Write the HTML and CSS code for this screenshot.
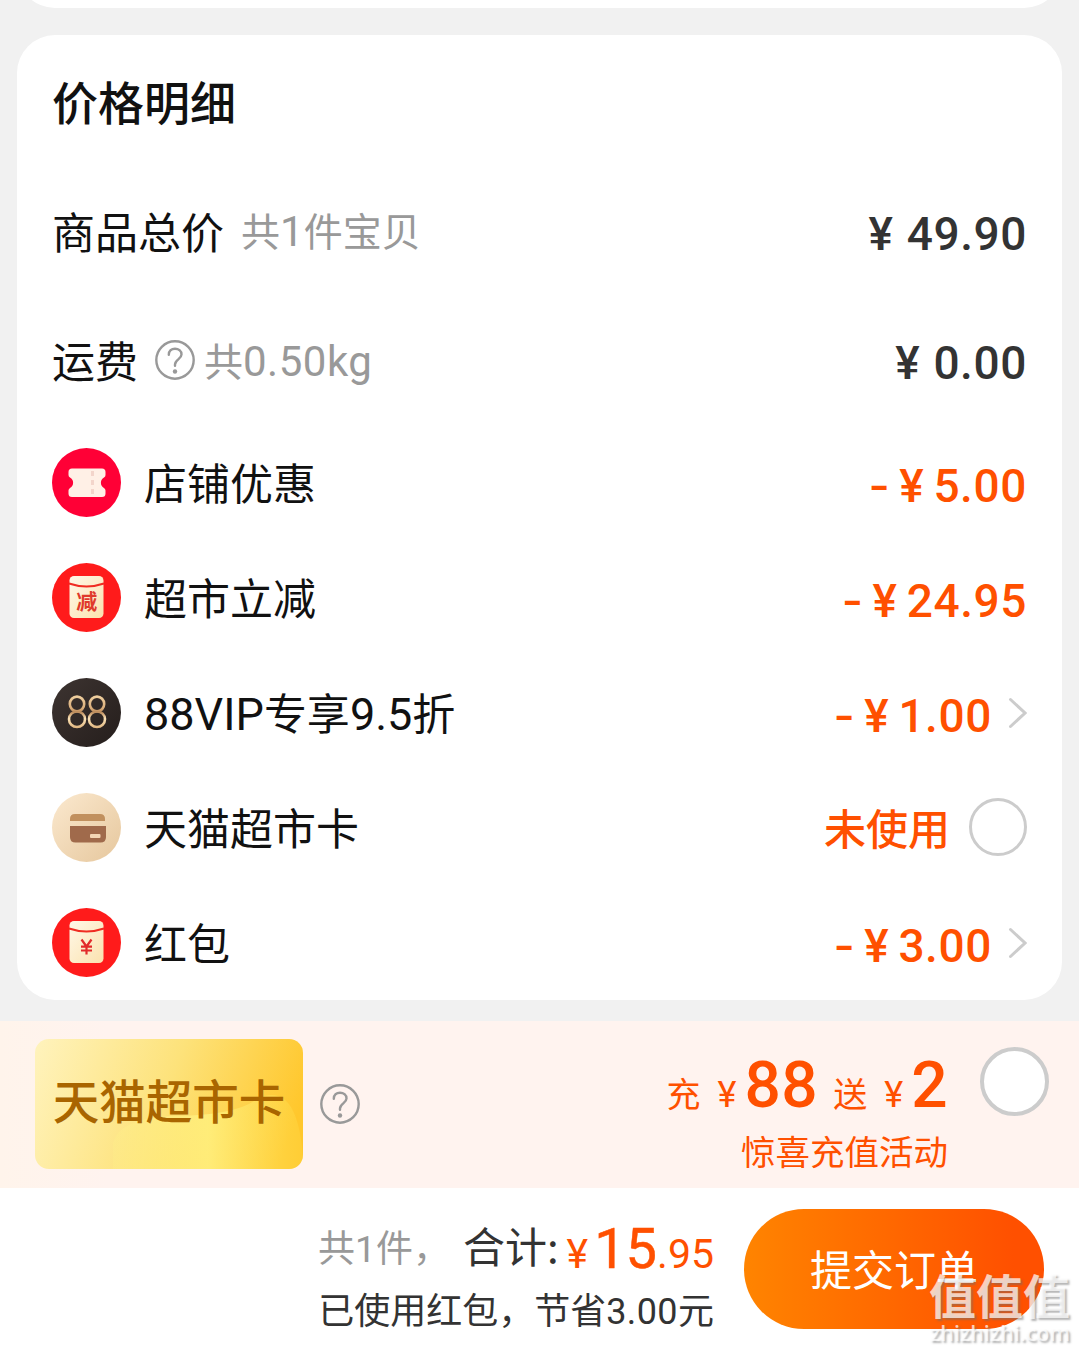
FILE: index.html
```html
<!DOCTYPE html>
<html lang="zh-CN">
<head>
    <meta charset="UTF-8">
    <meta name="viewport" content="width=device-width, initial-scale=1.0">
    <title>确认订单</title>
    <link rel="stylesheet" href="styles.css">
</head>
<body>

<div class="prev-card"></div>

<div class="price-card">
    <h3 class="card-title">价格明细</h3>

    <div class="row">
        <span class="label">商品总价</span>
        <span class="note note-goods">共<span class="num">1</span>件宝贝</span>
        <span class="price"><span class="yen">¥</span>49.90</span>
    </div>
    <div class="row">
        <span class="label">运费</span>
        <svg class="help" width="40" height="40" viewBox="0 0 40 40" fill="none" stroke="#999" stroke-width="2.4" stroke-linecap="round">
            <circle cx="20" cy="20" r="18.7"/>
            <path d="M13.8 14.8C13.8 10.8 16.5 8.700 20 8.700s6.500 2.300 6.500 5.800c0 4.600-6.500 5.200-6.500 10v1.200"/>
            <circle cx="20" cy="31.500" r="2.200" fill="#999" stroke="none"/>
        </svg>
        <span class="note note-weight">共<span class="num">0.50kg</span></span>
        <span class="price"><span class="yen">¥</span>0.00</span>
    </div>

    <div class="row discount">
        <svg class="icon" width="69" height="69" viewBox="0 0 69 69">
            <circle cx="34.5" cy="34.5" r="34.5" fill="#ff0036"/>
            <path d="M20 20.500h30q3.500 0 3.500 3.500v3q0 1.500-1.500 2.500a6 6 0 0 0 0 10.500q1.500 1 1.500 2.500v3q0 3.500-3.500 3.500H20q-3.500 0-3.500-3.500v-3q0-1.500 1.500-2.500a6 6 0 0 0 0-10.500q-1.500-1-1.500-2.500v-3q0-3.500 3.500-3.500z" fill="#fff0e6"/>
            <path d="M40.500 23v5M40.500 32v5M40.500 41v5" stroke="#f3d5cb" stroke-width="3"/>
        </svg>
        <span class="label">店铺优惠</span>
        <span class="price"><span class="minus">-</span><span class="yen">¥</span>5.00</span>
    </div>
    <div class="row discount">
        <svg class="icon" width="69" height="69" viewBox="0 0 69 69">
            <defs>
                <linearGradient id="packet" x1="0" y1="0" x2="1" y2="1">
                    <stop offset="0" stop-color="#fff8e8"/>
                    <stop offset="1" stop-color="#fbe2ae"/>
                </linearGradient>
            </defs>
            <circle cx="34.5" cy="34.5" r="34.5" fill="#ff1b1b"/>
            <rect x="17.5" y="13" width="34" height="42" rx="4.5" fill="url(#packet)"/>
            <path d="M17 20.500q17.500 6 35 0" fill="none" stroke="#f02c22" stroke-width="2"/>
            <text class="packet-char" x="34.700" y="45.500" text-anchor="middle">减</text>
        </svg>
        <span class="label">超市立减</span>
        <span class="price"><span class="minus">-</span><span class="yen">¥</span>24.95</span>
    </div>
    <div class="row discount">
        <svg class="icon" width="69" height="69" viewBox="0 0 69 69">
            <defs>
                <linearGradient id="gold" gradientUnits="userSpaceOnUse" x1="0" y1="18" x2="0" y2="50">
                    <stop offset="0" stop-color="#efcf9f"/>
                    <stop offset=".4" stop-color="#d9ab78"/>
                    <stop offset=".5" stop-color="#b98858"/>
                    <stop offset=".7" stop-color="#fbe2b6"/>
                    <stop offset="1" stop-color="#e0b680"/>
                </linearGradient>
                <linearGradient id="dark" x1="0" y1="0" x2="1" y2="1">
                    <stop offset="0" stop-color="#3d3431"/>
                    <stop offset="1" stop-color="#251e1c"/>
                </linearGradient>
            </defs>
            <circle cx="34.5" cy="34.5" r="34.5" fill="url(#dark)"/>
            <g fill="none" stroke="url(#gold)" stroke-width="2.600">
                <ellipse cx="25" cy="26" rx="7.200" ry="7.400"/>
                <ellipse cx="25" cy="41.200" rx="8" ry="7.800"/>
                <ellipse cx="45" cy="26" rx="7.200" ry="7.400"/>
                <ellipse cx="45" cy="41.200" rx="8" ry="7.800"/>
            </g>
        </svg>
        <span class="label label-vip"><span class="num">88VIP</span>专享<span class="num">9.5</span>折</span>
        <span class="price"><span class="minus">-</span><span class="yen">¥</span>1.00</span>
        <svg class="arrow" width="19" height="32" viewBox="0 0 19 32" fill="none" stroke="#ccc" stroke-width="3" stroke-linecap="round">
            <path d="M2.500 2.500L17 16L2.500 29.500"/>
        </svg>
    </div>
    <div class="row discount">
        <svg class="icon" width="69" height="69" viewBox="0 0 69 69">
            <defs>
                <linearGradient id="sand" x1="0" y1="0" x2="1" y2="1">
                    <stop offset="0" stop-color="#fbe9cf"/>
                    <stop offset="1" stop-color="#e6c79d"/>
                </linearGradient>
            </defs>
            <circle cx="34.5" cy="34.5" r="34.5" fill="url(#sand)"/>
            <path d="M18 28v-2q0-5 5-5h25q5 0 5 5v2z" fill="#c1905e"/>
            <path d="M18 33h36v11q0 5.500-5.500 5.500h-25q-5.500 0-5.500-5.500z" fill="#a06a4b"/>
            <rect x="38" y="41" width="10.500" height="4" rx="1" fill="#f3d6b5"/>
        </svg>
        <span class="label">天猫超市卡</span>
        <span class="unused">未使用</span>
        <span class="radio"></span>
    </div>
    <div class="row discount">
        <svg class="icon" width="69" height="69" viewBox="0 0 69 69">
            <circle cx="34.5" cy="34.5" r="34.5" fill="#ff1b1b"/>
            <rect x="17.5" y="13" width="34" height="42" rx="4.5" fill="url(#packet)"/>
            <path d="M17 20.500q17.500 6 35 0" fill="none" stroke="#f02c22" stroke-width="2"/>
            <path d="M29.500 31.500l5 7l5-7M34.500 38.500v8M29 38.700h11M29 42.500h11" fill="none" stroke="#e22b2b" stroke-width="2.200"/>
        </svg>
        <span class="label">红包</span>
        <span class="price"><span class="minus">-</span><span class="yen">¥</span>3.00</span>
        <svg class="arrow" width="19" height="32" viewBox="0 0 19 32" fill="none" stroke="#ccc" stroke-width="3" stroke-linecap="round">
            <path d="M2.500 2.500L17 16L2.500 29.500"/>
        </svg>
    </div>
</div>

<div class="recharge">
    <div class="gold-card">
        <svg class="gold-shape" width="268" height="130" viewBox="0 0 268 130">
            <defs>
                <linearGradient id="shine" x1="0" y1="0" x2="1" y2="0">
                    <stop offset="0" stop-color="#fff08a" stop-opacity=".3"/>
                    <stop offset=".5" stop-color="#fff07e" stop-opacity=".85"/>
                    <stop offset="1" stop-color="#ffdc4a" stop-opacity=".3"/>
                </linearGradient>
            </defs>
            <path d="M78 130V104Q84 80 135 77Q200 77 222 60Q262 40 268 118V130z" fill="url(#shine)"/>
        </svg>
        <span class="gold-text">天猫超市卡</span>
    </div>
    <svg class="help" width="40" height="40" viewBox="0 0 40 40" fill="none" stroke="#999" stroke-width="2.400" stroke-linecap="round">
        <circle cx="20" cy="20" r="18.700"/>
        <path d="M13.800 14.800C13.800 10.800 16.500 8.700 20 8.700s6.500 2.300 6.500 5.800c0 4.600-6.500 5.200-6.500 10v1.200"/>
        <circle cx="20" cy="31.500" r="2.200" fill="#999" stroke="none"/>
    </svg>
    <div class="offer">
        <div class="offer-main">
            <span>充</span>
            <span class="offer-yen">¥</span>
            <span class="offer-num">88</span>
            <span class="offer-send">送</span>
            <span class="offer-yen">¥</span>
            <span class="offer-num">2</span>
        </div>
        <div class="offer-sub">惊喜充值活动</div>
    </div>
    <span class="radio radio-big"></span>
</div>

<div class="submit-bar">
    <div class="summary">
        <div class="total">
            <span class="count">共<span class="num">1</span>件，</span>
            <span class="total-label">合计:</span>
            <div class="amount">
                <span class="total-yen">¥</span><span class="total-int">15</span><span class="total-dec">.95</span>
            </div>
        </div>
        <div class="saved">已使用红包，节省<span class="num">3.00</span>元</div>
    </div>
    <button type="button" class="submit">提交订单</button>
    <div class="watermark">
        <div class="mark-name">值值值</div>
        <div class="mark-site">zhizhizhi.com</div>
    </div>
</div>

</body>
</html>
```
FILE: styles.css
```css
* {
    box-sizing: border-box;
}
body {
    display: flow-root;
    font-family: "Noto Sans CJK SC", sans-serif;
    margin: 0;
    height: 1352px;
    background-color: #f1f1f1;
    color: #111;
    overflow: hidden;
}
span, h3, .saved, .offer-sub {
    white-space: nowrap;
}
.num {
    font-family: Roboto, sans-serif;
}
.prev-card {
    height: 80px;
    margin: -72px 17px 27px;
    background: white;
    border-radius: 38px;
}
.price-card {
    height: 965px;
    margin: 0 17px;
    padding: 0 35px;
    background: white;
    border-radius: 38px;
}
.card-title {
    margin: 0;
    height: 132px;
    line-height: 130px;
    font-size: 46px;
    font-weight: 500;
}
.row {
    display: flex;
    align-items: center;
    height: 129px;
}
.label {
    padding-bottom: 3px;
    font-size: 43px;
    line-height: 60px;
}
.label-vip {
    padding-bottom: 0;
}
.label-vip .num {
    font-size: 45px;
}
.note {
    padding-bottom: 2px;
    font-size: 39px;
    line-height: 60px;
    color: #999;
}
.note .num {
    font-size: 42px;
}
.note-goods {
    margin-left: 17px;
}
.note-weight {
    margin-left: 9px;
    padding-bottom: 0;
}
.note-weight .num {
    letter-spacing: 0.5px;
}
.help {
    flex: none;
    margin-left: 17px;
}
.row .help {
    margin-bottom: 1px;
}
.price {
    margin-left: auto;
    padding-top: 5px;
    font-family: Roboto, sans-serif;
    font-size: 46px;
    font-weight: 500;
    line-height: 60px;
    letter-spacing: 0.6px;
    color: #333;
}
.yen {
    margin-right: 13px;
}
.discount {
    height: 115px;
}
.discount .icon {
    flex: none;
    margin-right: 23px;
}
.discount .price {
    color: #ff5000;
}
.discount .yen {
    margin-right: 9px;
}
.minus {
    margin-right: 9px;
    font-family: Inter, sans-serif;
}
.packet-char {
    font-family: "Noto Sans CJK SC", sans-serif;
    font-size: 21px;
    font-weight: 700;
    fill: #e03a2c;
}
.arrow {
    flex: none;
    margin-left: 16px;
}
.unused {
    margin-left: auto;
    margin-right: 19px;
    padding-bottom: 2px;
    font-size: 42px;
    font-weight: 500;
    line-height: 60px;
    color: #ff5000;
}
.radio {
    flex: none;
    width: 58px;
    height: 58px;
    border: 3px solid #ccc;
    border-radius: 50%;
    background: white;
}
.row .radio {
    margin-bottom: 2px;
}
.recharge {
    display: flex;
    height: 167px;
    margin-top: 21px;
    padding: 18px 30px 0 35px;
    background: linear-gradient(90deg, #fff4eb, #fff3ef 10%);
}
.gold-card {
    position: relative;
    flex: none;
    width: 268px;
    height: 130px;
    border-radius: 14px;
    overflow: hidden;
    background: linear-gradient(110deg, #fff3bd 0%, #fde27a 48%, #ffc72c 92%);
    text-align: center;
}
.gold-shape {
    position: absolute;
    left: 0;
    top: 0;
}
.gold-text {
    position: relative;
    font-size: 46.5px;
    font-weight: 500;
    line-height: 120px;
    color: #a96500;
}
.recharge .help {
    margin-top: 45px;
}
.offer {
    margin-left: auto;
    text-align: right;
    color: #ff5000;
}
.offer-main {
    display: flex;
    align-items: baseline;
    justify-content: flex-end;
    height: 86px;
    padding-top: 9px;
    font-size: 34px;
    line-height: 76px;
}
.offer-yen {
    margin-left: 17px;
    font-family: Roboto, sans-serif;
    font-size: 36px;
}
.offer-num {
    margin-left: 8px;
    font-family: Roboto, sans-serif;
    font-size: 64px;
    font-weight: 500;
    letter-spacing: 0.5px;
}
.offer-send {
    margin-left: 15px;
}
.offer-sub {
    font-size: 34.5px;
    line-height: 50px;
}
.radio-big {
    width: 69px;
    height: 69px;
    margin: 8px 0 0 32px;
    border-width: 4px;
}
.submit-bar {
    position: relative;
    display: flex;
    justify-content: flex-end;
    height: 164px;
    padding: 21px 35px 0 0;
    background: white;
}
.summary {
    margin-right: 30px;
    text-align: right;
    color: #333;
}
.total {
    display: flex;
    align-items: flex-start;
    justify-content: flex-end;
    height: 75px;
}
.count {
    margin-right: 13px;
    font-size: 37px;
    line-height: 74px;
    color: #999;
}
.total-label {
    font-size: 42px;
    line-height: 72px;
}
.amount {
    padding-top: 2px;
    font-family: Roboto, sans-serif;
    line-height: 76px;
    color: #ff5000;
}
.total-yen {
    margin: 0 6px 0 8px;
    font-size: 41px;
}
.total-int {
    font-size: 56px;
    font-weight: 400;
    -webkit-text-stroke: 0.5px #ff5000;
}
.total-dec {
    font-size: 41px;
}
.saved {
    font-size: 36px;
    line-height: 48px;
}
.saved .num {
    letter-spacing: 0.4px;
}
.submit {
    width: 300px;
    height: 120px;
    padding: 0 0 3px;
    border: none;
    border-radius: 60px;
    background: linear-gradient(90deg, #ff8400, #ff5000 90%);
    color: white;
    font-family: inherit;
    font-size: 42px;
}
.watermark {
    position: absolute;
    right: 9px;
    bottom: 5px;
    color: rgba(255, 255, 255, 0.72);
    text-align: right;
    text-shadow: 2px 2px 2px rgba(110, 110, 110, 0.5);
}
.mark-name {
    font-size: 47px;
    font-weight: 700;
    line-height: 50px;
}
.mark-site {
    font-family: "Open Sans", sans-serif;
    font-size: 21.5px;
    font-weight: 600;
    line-height: 28px;
}
```
